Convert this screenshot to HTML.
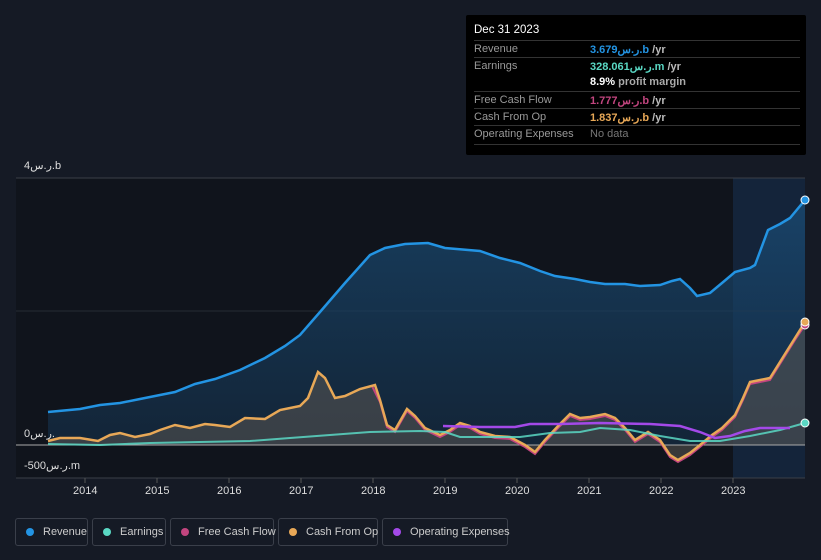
<!DOCTYPE html>
<html><head><meta charset="utf-8"><style>
html,body{margin:0;background:#151a25;width:821px;height:560px;overflow:hidden}
body{font-family:"Liberation Sans","Noto Sans CJK SC",sans-serif;position:relative}
.tip{position:absolute;left:466px;top:15px;width:340px;height:140px;background:#000;border-radius:2px;color:#ddd;font-size:11px}
.tip .h{position:absolute;left:8px;top:9px;color:#fff;font-size:11.5px}
.row{position:absolute;left:8px;width:326px;border-top:1px solid #333;height:17px;white-space:nowrap}
.row span{position:absolute;top:2px}
.row .l{left:0;color:#999}
.row .v{left:116px;font-weight:bold}
.lab{position:absolute;color:#ddd;font-size:11px}
.yr{position:absolute;top:485px;color:#ddd;font-size:11px}
.lg{position:absolute;top:518px;height:28px;border:1px solid #3a3f4a;border-radius:3px;color:#ccc;font-size:11px;box-sizing:border-box;line-height:26px;white-space:nowrap}
.lg i{position:absolute;left:10px;top:9px;width:8px;height:8px;border-radius:50%}
.lg span{position:absolute;left:27px}
</style></head><body>
<svg width="821" height="560" style="position:absolute;left:0;top:0">
<defs>
<linearGradient id="rg" x1="0" y1="0" x2="0" y2="1"><stop offset="0" stop-color="#1a4f7a" stop-opacity=".7"/><stop offset="1" stop-color="#15304a" stop-opacity=".6"/></linearGradient>
</defs>
<rect x="16" y="178" width="789" height="300" fill="#10141c"/>
<rect x="733" y="178" width="72" height="300" fill="#14243a"/>
<line x1="16" y1="178" x2="805" y2="178" stroke="#3a3f48"/>
<line x1="16" y1="311" x2="805" y2="311" stroke="#262b33"/>
<line x1="16" y1="478" x2="805" y2="478" stroke="#3a3f48"/>
<path fill="url(#rg)" d="M48,412 L80,409 100,405 120,403 140,399 160,395 175,392 195,384 215,379 240,370 265,358 285,346 300,335 320,312 345,283 370,255 385,248 405,244 428,243 445,248 480,251 500,258 520,263 540,271 555,276 575,279 590,282 605,284 625,284 640,286 660,285 672,281 680,279 690,288 697,296 710,293 722,283 735,272 750,268 755,265 768,230 780,224 790,218 805,200 L805,445 L48,445Z"/>
<path fill="#5a5652" fill-opacity=".55" d="M48,441 L60,438 80,438 98,441 110,435 120,433 135,437 150,434 160,430 175,425 190,428 205,424 215,425 230,427 245,418 265,419 280,410 300,406 308,398 318,372 325,378 335,398 345,396 360,389 375,385 380,400 387,425 395,430 407,409 415,416 425,428 440,435 450,430 460,423 470,426 480,432 495,436 510,437 525,445 535,452 545,440 560,424 570,414 580,418 590,417 605,414 615,418 625,428 635,440 648,432 660,440 670,455 678,460 690,453 700,445 712,435 722,428 735,415 743,398 750,382 760,380 770,378 780,362 795,338 805,322 L805,445 L48,445Z"/>
<line x1="16" y1="445" x2="805" y2="445" stroke="#aaa" stroke-width="1"/>
<path fill="none" stroke="#c2457f" stroke-width="2" d="M372,386 L380,402 387,427 395,432 407,411 415,418 425,430 440,437 450,432 460,425 470,428 480,434 495,438 510,439 525,447 535,454 545,442 560,426 570,416 580,420 590,419 605,416 615,420 625,430 635,442 648,434 660,442 670,457 678,462 690,455 700,447 712,437 722,430 735,417 743,400 750,384 760,382 770,380 780,364 795,340 805,325"/>
<path fill="none" stroke="#e8a857" stroke-width="2.5" d="M48,441 L60,438 80,438 98,441 110,435 120,433 135,437 150,434 160,430 175,425 190,428 205,424 215,425 230,427 245,418 265,419 280,410 300,406 308,398 318,372 325,378 335,398 345,396 360,389 375,385 380,400 387,425 395,430 407,409 415,416 425,428 440,435 450,430 460,423 470,426 480,432 495,436 510,437 525,445 535,452 545,440 560,424 570,414 580,418 590,417 605,414 615,418 625,428 635,440 648,432 660,440 670,455 678,460 690,453 700,445 712,435 722,428 735,415 743,398 750,382 760,380 770,378 780,362 795,338 805,322"/>
<path fill="none" stroke="#5ad8c4" stroke-width="2" stroke-opacity=".85" d="M48,444 L100,445 150,443 250,441 290,438 330,435 370,432 420,431 445,432 460,437 500,437 520,437 550,433 580,432 600,428 630,430 660,436 690,441 720,441 750,436 780,430 805,423"/>
<path fill="none" stroke="#a349e8" stroke-width="2.5" d="M443,426 L480,427 515,427 530,424 560,424 600,423 650,424 680,426 700,432 715,438 730,436 745,431 760,428 790,428"/>
<path fill="none" stroke="#2394e3" stroke-width="2.5" d="M48,412 L80,409 100,405 120,403 140,399 160,395 175,392 195,384 215,379 240,370 265,358 285,346 300,335 320,312 345,283 370,255 385,248 405,244 428,243 445,248 480,251 500,258 520,263 540,271 555,276 575,279 590,282 605,284 625,284 640,286 660,285 672,281 680,279 690,288 697,296 710,293 722,283 735,272 750,268 755,265 768,230 780,224 790,218 805,200"/>
<circle cx="805" cy="200" r="4" fill="#2394e3" stroke="#fff" stroke-width="1"/>
<circle cx="805" cy="325" r="4" fill="#c2457f" stroke="#fff" stroke-width="1"/>
<circle cx="805" cy="322" r="4" fill="#e8a857" stroke="#fff" stroke-width="1"/>
<circle cx="805" cy="423" r="4" fill="#5ad8c4" stroke="#fff" stroke-width="1"/>
<g stroke="#555"><line x1="85" y1="478" x2="85" y2="483"/><line x1="157" y1="478" x2="157" y2="483"/><line x1="229" y1="478" x2="229" y2="483"/><line x1="301" y1="478" x2="301" y2="483"/><line x1="373" y1="478" x2="373" y2="483"/><line x1="445" y1="478" x2="445" y2="483"/><line x1="517" y1="478" x2="517" y2="483"/><line x1="589" y1="478" x2="589" y2="483"/><line x1="661" y1="478" x2="661" y2="483"/><line x1="733" y1="478" x2="733" y2="483"/></g>
</svg>
<div class="lab" style="left:24px;top:159px">4ر.س.b</div>
<div class="lab" style="left:24px;top:427px">0ر.س.</div>
<div class="lab" style="left:24px;top:459px">-500ر.س.m</div>
<div class="yr" style="left:73px">2014</div><div class="yr" style="left:145px">2015</div><div class="yr" style="left:217px">2016</div><div class="yr" style="left:289px">2017</div><div class="yr" style="left:361px">2018</div><div class="yr" style="left:433px">2019</div><div class="yr" style="left:505px">2020</div><div class="yr" style="left:577px">2021</div><div class="yr" style="left:649px">2022</div><div class="yr" style="left:721px">2023</div>
<div class="tip">
<div class="h">Dec 31 2023</div>
<div class="row" style="top:25px"><span class="l">Revenue</span><span class="v" style="color:#2394e3">3.679ر.س.b <span style="color:#bbb;position:static">/yr</span></span></div>
<div class="row" style="top:42px"><span class="l">Earnings</span><span class="v" style="color:#5ad8c4">328.061ر.س.m <span style="color:#bbb;position:static">/yr</span></span></div>
<div class="row" style="top:59px;border-top:none"><span class="v" style="color:#fff">8.9% <span style="color:#aaa;position:static">profit margin</span></span></div>
<div class="row" style="top:76px"><span class="l">Free Cash Flow</span><span class="v" style="color:#c2457f">1.777ر.س.b <span style="color:#bbb;position:static">/yr</span></span></div>
<div class="row" style="top:93px"><span class="l">Cash From Op</span><span class="v" style="color:#e8a857">1.837ر.س.b <span style="color:#bbb;position:static">/yr</span></span></div>
<div class="row" style="top:110px"><span class="l">Operating Expenses</span><span class="v" style="color:#777;font-weight:normal">No data</span></div>
<div class="row" style="top:129px;height:0"></div>
</div>
<div class="lg" style="left:15px;width:73px"><i style="background:#2394e3"></i><span>Revenue</span></div>
<div class="lg" style="left:92px;width:74px"><i style="background:#5ad8c4"></i><span>Earnings</span></div>
<div class="lg" style="left:170px;width:104px"><i style="background:#c2457f"></i><span>Free Cash Flow</span></div>
<div class="lg" style="left:278px;width:100px"><i style="background:#e8a857"></i><span>Cash From Op</span></div>
<div class="lg" style="left:382px;width:126px"><i style="background:#a349e8"></i><span>Operating Expenses</span></div>
</body></html>
